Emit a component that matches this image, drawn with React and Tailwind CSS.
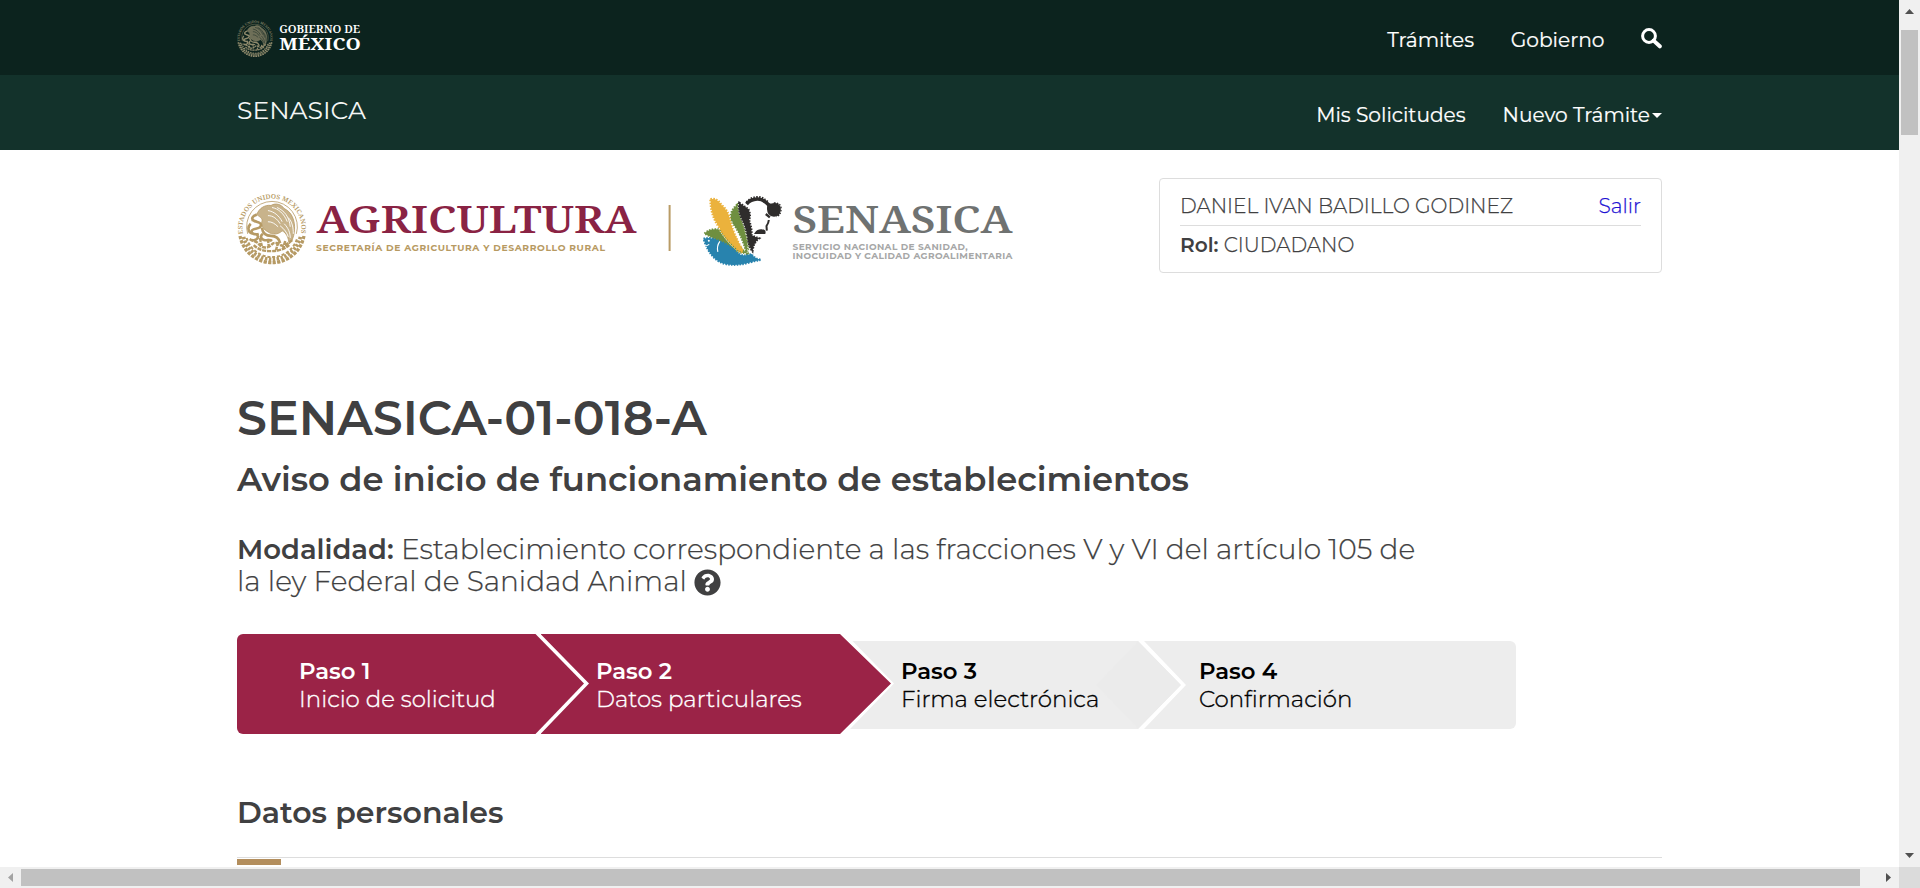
import { FaQuestionCircle } from 'react-icons/fa';

const SERIF = "'Noto Serif', 'DejaVu Serif', serif";
const SANS = "Montserrat, Inter, sans-serif";

function Seal({ id, cx, cy, r, color, bg }) {
  return (
    <g transform={`translate(${cx} ${cy}) scale(${r / 34})`} fill="none" stroke={color}>
      <defs>
        <path id={id} d="M-28.2 7A29 29 0 1 1 28.2 7" />
      </defs>
      <text fill={color} stroke="none" fontFamily={SERIF} fontWeight="600" fontSize="6.2">
        <textPath href={`#${id}`} startOffset="1" textLength="102" lengthAdjust="spacingAndGlyphs">ESTADOS UNIDOS MEXICANOS</textPath>
      </text>
      <path d="M-24 6A25 25 0 1 1 24 6" strokeWidth="0.8" />
      <path d="M-31.5 8A32 32 0 0 0 31.5 8" strokeWidth="3.2" strokeDasharray="3.2 1.3" />
      <path d="M-28 9A28.8 28.8 0 0 0 28 9" strokeWidth="3.6" strokeDasharray="2.4 1.5" />
      <path d="M-25 10A26 26 0 0 0 25 10" strokeWidth="2" strokeDasharray="3 1.8" />
      <path d="M-15 -13c2-6 8-10 14-9 5-3 10-1 13 3 6 3 9 8 10 15 1 8-1 16-5 20-1-7-3-11-7-13-4 4-10 4-14 1-4-2-7-6-6-10 1-3-1-4-5-7z" fill={color} fillOpacity="0.75" strokeWidth="0.8" />
      <path d="M-4-17c6 1 11 5 14 11M0-20c6 1 12 6 15 14M-4-12c5 0 9 3 12 8M5-20c7 3 12 9 13 19M-4-6c4 0 7 2 10 5M12-4c4 4 6 9 6 14M8-2c4 3 7 7 8 11M16-10c4 4 5 10 5 16" stroke={bg} strokeWidth="0.9" />
      <path d="M-15-13c-4 1-6 4-3 6 3 2 8 1 7 5s-8 2-9 5 4 4 7 3M-21-4c-3 3-3 7 0 9s6 0 7 3-3 5-6 4M-10 0c1 6 4 8 9 8 5 0 8 3 9 7M-20-8l5 2M-9 6c-3 2-2 5 1 6s6-1 8 1" strokeWidth="2.6" />
      <path d="M-22 11c4 3 7 2 9 5s5 4 9 3 4-5 8-4 5 4 9 2 5-5 8-4M-18 17c4 4 9 6 17 6s13-2 18-6M-12 10l2 8M-4 11l1 9M6 14l-2 8M13 13l-2 7" strokeWidth="2.4" strokeDasharray="4 0.9" />
    </g>
  );
}

function AnimalMark() {
  return (
    <g transform="translate(694.5 192) scale(0.3333)" strokeWidth="6" strokeDasharray="4.5 4">
      <path d="M30 125Q44 110 68 112Q90 106 112 134Q134 166 158 184L130 182Q78 148 30 125z" fill="#6f8f40" stroke="#6f8f40" />
      <path d="M128 38Q104 56 110 88Q128 110 140 136Q150 160 157 186Q164 176 160 150Q150 110 138 82Q130 60 128 38z" fill="#6f8f40" stroke="#6f8f40" />
      <path d="M48 22Q66 16 80 38Q102 56 106 84Q116 124 146 176Q138 184 124 168Q92 140 74 106Q48 70 48 22z" fill="#ebb23c" stroke="#ebb23c" strokeWidth="7" />
      <path d="M112 88Q124 134 151 176M72 110Q94 146 126 176Q146 192 158 182Q164 160 152 118" fill="none" stroke="#fff" strokeWidth="3" strokeDasharray="4 4" />
      <path d="M27 140Q50 134 76 148Q108 160 128 182Q144 196 172 186Q176 198 200 204Q184 206 164 212Q128 222 96 217Q48 208 27 140z" fill="#2883ae" stroke="#2883ae" />
      <path d="M76 148Q66 162 70 180M28 162Q38 162 44 157" fill="none" stroke="#fff" strokeWidth="3.5" strokeDasharray="0" />
      <circle cx="43" cy="146" r="3" fill="#fff" stroke="none" />
      <path d="M134 32Q150 42 162 52Q170 68 164 84Q172 108 172 130Q184 136 194 139Q178 150 174 178Q162 164 160 140Q154 104 142 82Q130 56 134 32z" fill="#2f2d2c" stroke="#2f2d2c" />
      <path d="M156 36Q168 22 188 21Q206 20 224 40" fill="none" stroke="#2f2d2c" strokeWidth="11" strokeDasharray="0" />
      <path d="M156 31Q168 16 188 15Q206 14 222 32" fill="none" stroke="#2f2d2c" strokeWidth="6" />
      <path d="M222 38Q232 38 240 36Q254 36 256 50Q256 66 246 70Q232 74 224 64Q218 52 222 38z" fill="#2f2d2c" stroke="#2f2d2c" strokeDasharray="0" />
      <path d="M238 33Q259 32 260 50Q259 70 246 74" fill="none" stroke="#2f2d2c" strokeWidth="4" />
      <path d="M214 66L226 76" fill="none" stroke="#2f2d2c" strokeWidth="7" strokeDasharray="0" />
      <path d="M184 123Q190 114 202 115Q212 115 210 123z" fill="#2f2d2c" stroke="#2f2d2c" strokeDasharray="0" />
      <path d="M223 84Q222 94 216 102L217 116" fill="none" stroke="#2f2d2c" strokeDasharray="0" strokeWidth="6" />
    </g>
  );
}

function Brand() {
  return (
    <svg width="780" height="95" viewBox="237 178 780 95" className="block shrink-0">
      <Seal id="seal-ring" cx={272} cy={227.8} r={34.5} color="#b69a64" bg="#ffffff" />
      <text x="316.5" y="232.8" fontFamily={SERIF} fontWeight="600" fontSize="38.5" fill="#8a2344" textLength="320" lengthAdjust="spacingAndGlyphs">AGRICULTURA</text>
      <text x="316" y="250.8" fontFamily={SANS} fontWeight="700" fontSize="9.2" fill="#b79a62" textLength="289" lengthAdjust="spacing">SECRETARÍA DE AGRICULTURA Y DESARROLLO RURAL</text>
      <rect x="668.6" y="205" width="2" height="46" fill="#b99c66" />
      <AnimalMark />
      <text x="792.5" y="232.6" fontFamily={SERIF} fontWeight="600" fontSize="38.5" fill="#6f7271" textLength="220" lengthAdjust="spacingAndGlyphs">SENASICA</text>
      <text x="792.5" y="250" fontFamily={SANS} fontWeight="700" fontSize="9" fill="#a6a7a7" textLength="175" lengthAdjust="spacing">SERVICIO NACIONAL DE SANIDAD,</text>
      <text x="792.5" y="259.4" fontFamily={SANS} fontWeight="700" fontSize="9" fill="#a6a7a7" textLength="220" lengthAdjust="spacing">INOCUIDAD Y CALIDAD AGROALIMENTARIA</text>
    </svg>
  );
}

function GovLogo() {
  return (
    <svg width="124" height="38" viewBox="237 18 124 38" className="block">
      <Seal id="gov-ring" cx={255} cy={37} r={18} color="#8f8a6c" bg="#0c231e" />
      <text x="279.2" y="32" fontFamily={SERIF} fontWeight="600" fontSize="9.8" fill="#fff" textLength="81" lengthAdjust="spacingAndGlyphs">GOBIERNO DE</text>
      <text x="279.2" y="49" fontFamily={SERIF} fontWeight="700" fontSize="16.6" fill="#fff" textLength="81.5" lengthAdjust="spacingAndGlyphs">MÉXICO</text>
    </svg>
  );
}

function StepText({ title, label }) {
  return (
    <div className="relative leading-[28px] whitespace-nowrap">
      <p className="text-[22.8px] font-semibold">{title}</p>
      <p className="text-[22.9px] font-light [-webkit-text-stroke:0.35px_currentColor]">{label}</p>
    </div>
  );
}

function Steps() {
  return (
    <div className="mt-[37px] flex h-[100px] items-center">
      <div className="h-[100px] w-[347px] rounded-l-[6px] bg-[#9b2347] pt-[23px] pl-[62px] text-white [clip-path:polygon(0_0,298.5px_0,347px_49.5px,298.5px_100px,0_100px)]">
        <StepText title="Paso 1" label="Inicio de solicitud" />
      </div>
      <div className="-ml-[43.5px] h-[100px] w-[350.5px] bg-[#9b2347] pt-[23px] pl-[55.5px] text-white [clip-path:polygon(0_0,299.5px_0,350.5px_49.5px,299.5px_100px,0_100px,48.5px_49.5px)]">
        <StepText title="Paso 2" label="Datos particulares" />
      </div>
      <div className="relative mt-[2px] -ml-[41px] h-[88px] w-[331px] bg-[#ededed] pt-[16px] pl-[51px] text-black [clip-path:polygon(2.5px_0,288px_0,331px_44px,288px_88px,0_88px,44px_42.5px)]">
        <div className="absolute top-0 right-0 h-[88px] w-[85px] bg-[#ebebeb] [clip-path:polygon(0_50%,50%_0,100%_50%,50%_100%)]" />
        <StepText title="Paso 3" label="Firma electrónica" />
      </div>
      <div className="mt-[2px] -ml-[37px] h-[88px] w-[372px] rounded-r-[6px] bg-[#ededed] pt-[16px] pl-[55px] text-black [clip-path:polygon(0_0,100%_0,100%_100%,0_100%,42px_44px)]">
        <StepText title="Paso 4" label="Confirmación" />
      </div>
    </div>
  );
}

function Page() {
  return (
    <div className="h-[867px] w-[1899px] overflow-hidden bg-white">
      <header className="text-white">
        <div className="flex h-[75px] items-center justify-between bg-[#0c231e] px-[237px]">
          <GovLogo />
          <nav className="flex items-center gap-[36.5px] pt-[4px] text-[20.2px] leading-[28px] [-webkit-text-stroke:0.2px_#fff]">
            <a>Trámites</a>
            <a>Gobierno</a>
            <svg width="21" height="21" viewBox="0 0 21 21" className="mb-[3px]" fill="none" stroke="#fff">
              <circle cx="8" cy="8" r="6.4" strokeWidth="3" />
              <path d="M12.6 12.6L18.8 18.3" strokeWidth="4" strokeLinecap="round" />
            </svg>
          </nav>
        </div>
        <div className="flex h-[75px] items-center justify-between bg-[#13322b] px-[237px]">
          <a className="pb-[5px] text-[25.1px] leading-[30px] text-[#f4f6f5]">SENASICA</a>
          <nav className="flex items-center gap-[37px] pt-[4px] text-[20.15px] leading-[28px] [-webkit-text-stroke:0.2px_#fff]">
            <a>Mis Solicitudes</a>
            <a className="flex items-center gap-[2px]">
              Nuevo Trámite
              <span className="mt-[1px] border-x-5 border-t-5 border-x-transparent border-t-white" />
            </a>
          </nav>
        </div>
      </header>
      <main className="ml-[237px] w-[1425px] pt-[28px]">
        <div className="flex items-start justify-between">
          <Brand />
          <div className="h-[95px] w-[503px] rounded-[4px] border border-[#dddddd] px-[20px] pt-[13px] text-[20.15px] leading-[28px] font-light [-webkit-text-stroke:0.25px_currentColor]">
            <div className="flex justify-between border-b border-[#dddddd] pb-[5px]">
              <span>DANIEL IVAN BADILLO GODINEZ</span>
              <a className="text-[#1d12d3] [-webkit-text-stroke:0.25px_#1d12d3]">Salir</a>
            </div>
            <p className="mt-[5px]"><b className="font-semibold [-webkit-text-stroke:0px]">Rol:</b> CIUDADANO</p>
          </div>
        </div>
        <h1 className="mt-[117px] text-[47.5px] leading-[56px] font-semibold">SENASICA-01-018-A</h1>
        <h2 className="mt-[13px] text-[33.8px] leading-[40px] font-semibold">Aviso de inicio de funcionamiento de establecimientos</h2>
        <p className="mt-[34px] text-[28px] leading-[32px] font-light whitespace-nowrap [-webkit-text-stroke:0.25px_currentColor]">
          <b className="text-[27.5px] font-semibold [-webkit-text-stroke:0px]">Modalidad:</b> Establecimiento correspondiente a las fracciones V y VI del artículo 105 de
          <br />
          la ley Federal de Sanidad Animal <FaQuestionCircle className="inline h-[27px] w-[27px] align-[-4.5px]" />
        </p>
        <Steps />
        <h3 className="mt-[60px] text-[30px] leading-[38px] font-semibold">Datos personales</h3>
        <div className="mt-[25px] border-t border-[#dddddd] pt-[1px]">
          <div className="h-[6px] w-[44px] bg-[#b38e5d]" />
        </div>
      </main>
    </div>
  );
}

export default function App() {
  return (
    <div className="grid h-[888px] w-[1920px] grid-cols-[1899px_21px] grid-rows-[867px_21px] overflow-hidden bg-[#f0f0f0] font-[Montserrat,Inter,sans-serif] text-[#404041]">
      <Page />
      <div className="flex flex-col items-center">
        <svg width="9" height="5" viewBox="0 0 9 5" className="mt-[9px]"><path d="M0 5L4.5 0L9 5z" fill="#505050" /></svg>
        <div className="mt-[16px] h-[105px] w-[17px] bg-[#c1c1c1]" />
        <svg width="9" height="5" viewBox="0 0 9 5" className="mt-auto mb-[9px]"><path d="M0 0L4.5 5L9 0z" fill="#505050" /></svg>
      </div>
      <div className="flex items-center">
        <svg width="5" height="9" viewBox="0 0 5 9" className="ml-[8px]"><path d="M5 0L0 4.5L5 9z" fill="#a3a3a3" /></svg>
        <div className="ml-[8px] h-[17px] w-[1839px] bg-[#c1c1c1]" />
        <svg width="5" height="9" viewBox="0 0 5 9" className="mr-[8px] ml-auto"><path d="M0 0L5 4.5L0 9z" fill="#505050" /></svg>
      </div>
      <div className="bg-[#dbdbdb]" />
    </div>
  );
}
